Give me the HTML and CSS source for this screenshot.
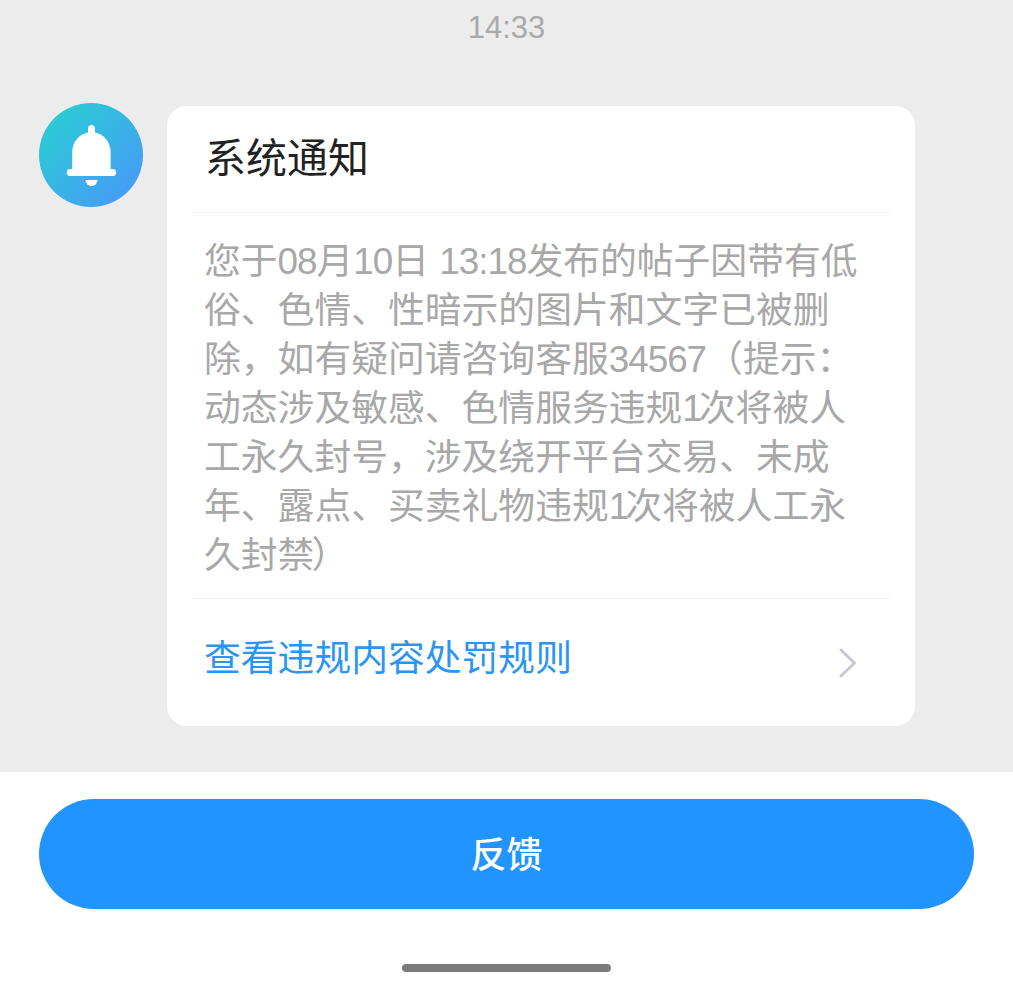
FILE: index.html
```html
<!DOCTYPE html>
<html lang="zh-CN">
<head>
    <meta charset="UTF-8">
    <meta name="viewport" content="width=device-width, initial-scale=1.0">
    <title>系统通知</title>
    <link rel="stylesheet" href="styles.css">
</head>
<body>

    <!-- 消息列表 -->
    <main class="chat">
        <div class="time">14:33</div>
        <div class="message">
            <div class="avatar">
                <svg viewBox="0 0 104 104" width="104" height="104">
                    <path fill="#fff" d="M52.500 22c2 0 3.500 1.500 3.500 3.500v4c9.500 2 15.700 10 15.700 20V66h2a3.500 3.500 0 0 1 0 7H31.200a3.500 3.500 0 0 1 0-7h2V49.500c0-10 6.200-18 15.800-20v-4c0-2 1.500-3.500 3.500-3.500z"/>
                    <path fill="#fff" d="M46.500 77h12a6 6 0 0 1-12 0z"/>
                </svg>
            </div>
            <div class="card">
                <div class="card-title">系统通知</div>
                <div class="card-body">您于<span class="num">08</span>月<span class="num">10</span>日 <span class="num">13:18</span>发布的帖子因带有低<br>俗、色情、性暗示的图片和文字已被删<br>除，如有疑问请咨询客服<span class="num">34567</span>（提示：<br>动态涉及敏感、色情服务违规<span class="one">1</span>次将被人<br>工永久封号，涉及绕开平台交易、未成<br>年、露点、买卖礼物违规<span class="one">1</span>次将被人工永<br>久封禁<span class="paren">）</span></div>
                <div class="card-link">
                    <span>查看违规内容处罚规则</span>
                    <svg class="arrow" viewBox="0 0 18 30" width="18" height="30">
                        <path d="M2 2l13.500 13L2 28" fill="none" stroke="#c8c8d4" stroke-width="3" stroke-linecap="round" stroke-linejoin="round"/>
                    </svg>
                </div>
            </div>
        </div>
    </main>

    <!-- 底部按钮 -->
    <footer class="footer">
        <button class="feedback">反馈</button>
        <div class="home-bar"></div>
    </footer>

</body>
</html>
```

FILE: styles.css
```css
* {
    box-sizing: border-box;
}

body {
    margin: 0;
    height: 1000px;
    display: flex;
    flex-direction: column;
    background-color: #fff;
    font-family: "Liberation Sans", "Noto Sans CJK SC", sans-serif;
}

.chat {
    height: 772px;
    background-color: #ececec;
}

.time {
    height: 106px;
    padding-top: 10px;
    text-align: center;
    font-size: 31px;
    line-height: 36px;
    color: #a9a9a9;
}

.message {
    display: flex;
    align-items: flex-start;
    gap: 24px;
    padding-left: 39px;
}

.avatar {
    width: 104px;
    height: 104px;
    margin-top: -3px;
    border-radius: 50%;
    background: linear-gradient(135deg, #27d3cf, #4a94fb);
    flex-shrink: 0;
}

.card {
    width: 748px;
    height: 620px;
    padding: 0 25px;
    background-color: #fff;
    border-radius: 20px;
}

.card-title {
    height: 107px;
    padding: 30px 13px 0;
    font-size: 41px;
    line-height: 46px;
    color: #222;
    border-bottom: 1px solid #f2f2f2;
}

.card-body {
    height: 386px;
    padding: 24px 12px 0;
    font-size: 36.800px;
    line-height: 49px;
    color: #a8a8a8;
    white-space: nowrap;
    border-bottom: 1px solid #f2f2f2;
}

.num {
    letter-spacing: -1px;
}

.one {
    letter-spacing: -4px;
}

.paren {
    margin-left: -3px;
}

.card-link {
    display: flex;
    justify-content: space-between;
    padding: 35px 33px 0 12px;
    font-size: 36.800px;
    line-height: 50px;
    color: #2a95f5;
}

.arrow {
    margin-top: 14px;
}

.footer {
    flex: 1;
    padding: 27px 39px 0;
}

.feedback {
    display: block;
    width: 935px;
    height: 110px;
    padding-bottom: 5px;
    border: none;
    border-radius: 55px;
    background-color: #2294ff;
    color: #fff;
    font-family: inherit;
    font-size: 36px;
    font-weight: 500;
}

.home-bar {
    width: 209px;
    height: 8px;
    margin: 55px auto 0;
    border-radius: 4px;
    background-color: #7b7b7b;
}
```
